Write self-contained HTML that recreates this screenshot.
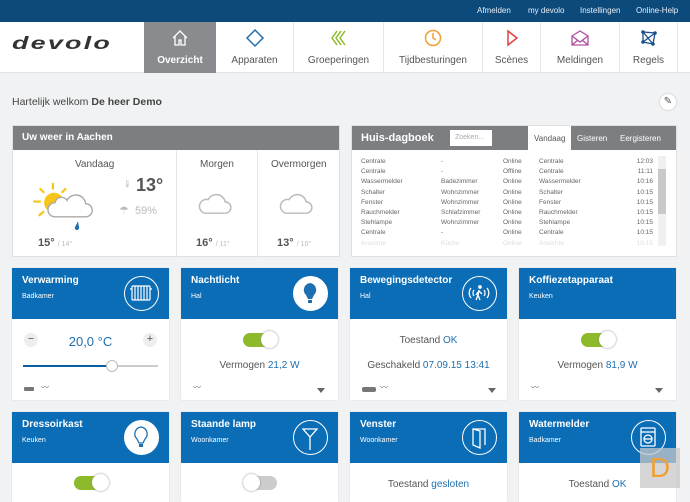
<!DOCTYPE html>
<html><head><meta charset="utf-8"><style>
*{box-sizing:border-box;margin:0;padding:0}
body{width:690px;height:498px;overflow:hidden;background:#f1f2f3;font-family:"Liberation Sans",sans-serif;color:#555;position:relative;font-size:11px}
.abs{position:absolute}
.top{left:0;top:0;width:690px;height:22px;background:#0d4a7c}
.top span{position:absolute;top:6px;font-size:8px;color:#e8eef5}
.nav{left:0;top:22px;width:690px;height:51px;background:#fff;border-bottom:1px solid #e2e3e4}
.tab{position:absolute;top:0;height:51px;text-align:center;font-size:10px;color:#555;border-right:1px solid #e6e6e6}
.tab .lbl{position:absolute;bottom:7px;left:0;right:0}
.tab svg{position:absolute;top:6px;left:50%;margin-left:-10px}
.panel{background:#fff;border:1px solid #e0e0e0}
.ph{background:#7c7e81;color:#fff;font-weight:bold;font-size:10px;height:24px;padding:6px 9px}
.card{position:absolute;width:157px;background:#fff;box-shadow:0 0 1px #ccc}
.ch{height:51px;background:#0b6db6;color:#fff;padding:7px 10px;position:relative}
.ch b{font-size:10px;display:block}
.ch small{font-size:7px;display:block;margin-top:7px}
.ic{position:absolute;right:10px;top:8px;width:35px;height:35px;border-radius:50%;border:1.5px solid #fff}
.ic.f{background:#fff}
.sw{position:absolute;width:34px;height:14px;border-radius:7px;background:#8cba2b}
.sw i{position:absolute;top:-2px;width:17px;height:17px;border-radius:50%;background:#fff;box-shadow:0 0 2px #888}
.ctr{position:absolute;left:0;right:0;text-align:center;font-size:10px;color:#555}
.bl{color:#1e6fb0}
.tri{position:absolute;width:0;height:0;border-left:4px solid transparent;border-right:4px solid transparent;border-top:5px solid #666}
table{border-collapse:collapse;font-size:6.5px;color:#666}
td{padding:0;height:10.2px;line-height:10.2px}
</style></head><body>
<div class="abs top"><span style="left:477px">Afmelden</span><span style="left:528px">my devolo</span><span style="left:580px">Instellingen</span><span style="left:636px">Online-Help</span></div>
<div class="abs nav">
<div class="abs" style="left:12px;top:12px;font-size:24px;font-style:italic;font-weight:bold;color:#333;letter-spacing:2px;transform:scale(1.12,.72);transform-origin:top left">devolo</div>
<div class="tab" style="left:144px;width:72px;background:#898b8e;color:#fff;font-weight:bold;border:none"><svg width="20" height="20" viewBox="0 0 20 20"><path d="M3 10L10 3 17 10M5 8v9h4v-5h2v5h4V8" fill="none" stroke="#fff" stroke-width="1.3"/></svg><div class="lbl">Overzicht</div></div>
<div class="tab" style="left:216px;width:78px"><svg width="20" height="20"><path d="M10 2l8 8-8 8-8-8z" fill="none" stroke="#1e6fb0" stroke-width="1.5"/></svg><div class="lbl">Apparaten</div></div>
<div class="tab" style="left:294px;width:90px"><svg width="20" height="20"><path d="M8 3l-5 7 5 7M12 3l-5 7 5 7M16 3l-5 7 5 7" fill="none" stroke="#8cba2b" stroke-width="1.5"/></svg><div class="lbl">Groeperingen</div></div>
<div class="tab" style="left:384px;width:99px"><svg width="20" height="20"><circle cx="10" cy="10" r="7.5" fill="none" stroke="#f0a030" stroke-width="1.5"/><path d="M10 5v5l3 2" fill="none" stroke="#f0a030" stroke-width="1.5"/></svg><div class="lbl">Tijdbesturingen</div></div>
<div class="tab" style="left:483px;width:58px"><svg width="20" height="20"><path d="M6 3l9 7-9 7z" fill="none" stroke="#e04040" stroke-width="1.5"/></svg><div class="lbl">Scènes</div></div>
<div class="tab" style="left:541px;width:79px"><svg width="20" height="20"><path d="M2 8l8-5 8 5v9H2zM2 8l8 6 8-6M2 17l6-5M18 17l-6-5" fill="none" stroke="#b050a0" stroke-width="1.3"/></svg><div class="lbl">Meldingen</div></div>
<div class="tab" style="left:620px;width:58px"><svg width="20" height="20"><path d="M4 4l12 1-2 11-10-2zM4 4l10 12M16 5L4 14" fill="none" stroke="#1a4f8a" stroke-width="1.3"/><circle cx="4" cy="4" r="1.8" fill="#1a4f8a"/><circle cx="16" cy="5" r="1.8" fill="#1a4f8a"/><circle cx="14" cy="16" r="1.8" fill="#1a4f8a"/><circle cx="4" cy="14" r="1.8" fill="#1a4f8a"/></svg><div class="lbl">Regels</div></div>
</div>
<div class="abs" style="left:12px;top:96px;font-size:10.5px;color:#444">Hartelijk welkom <b>De heer Demo</b></div>
<div class="abs" style="left:659px;top:93px;width:18px;height:18px;border-radius:50%;background:#fff;border:1px solid #ddd;text-align:center;font-size:10px;line-height:16px;color:#555">✎</div>

<div class="abs panel" style="left:12px;top:125px;width:328px;height:132px"><div class="ph">Uw weer in Aachen</div>
<div class="abs" style="left:163px;top:24px;width:1px;height:107px;background:#e5e5e5"></div>
<div class="abs" style="left:244px;top:24px;width:1px;height:107px;background:#e5e5e5"></div>
<div class="abs" style="left:62px;top:33px;font-size:10px">Vandaag</div>
<div class="abs" style="left:187px;top:33px;font-size:10px">Morgen</div>
<div class="abs" style="left:258px;top:33px;font-size:10px">Overmorgen</div>
<svg class="abs" style="left:18px;top:52px" width="70" height="58" viewBox="0 0 64 50"><g stroke="#f5c518" stroke-width="2"><path d="M20 3v6M8 8l4 4M2 20h7M7 33l5-4M32 8l-4 4"/></g><circle cx="21" cy="21" r="9" fill="#f5c518"/><path d="M22 34h28a6 6 0 0 0 0-12 9 9 0 0 0-17-3 6 6 0 0 0-11 2 6 6 0 0 0 0 13z" fill="#fff" stroke="#aaa" stroke-width="1.3"/><path d="M43 38l-3 6a2 2 0 0 0 4 0z" fill="#1e6fb0"/></svg>
<div class="abs" style="left:110px;top:54px;font-size:7px;color:#bbb">🌡</div>
<div class="abs" style="left:123px;top:49px;font-size:18px;font-weight:bold;color:#555">13°</div>
<div class="abs" style="left:106px;top:78px;font-size:11px;color:#bbb">☂ &nbsp;59%</div>
<div class="abs" style="left:25px;top:111px;font-size:11px;font-weight:bold">15° <span style="font-size:7px;color:#bbb;font-weight:normal">/ 14°</span></div>
<svg class="abs" style="left:185px;top:64px" width="34" height="26" viewBox="0 0 30 22"><path d="M6 20h18a5 5 0 0 0 0-10 8 8 0 0 0-15-2 6 6 0 0 0-3 12z" fill="none" stroke="#bbb" stroke-width="1.3"/></svg>
<svg class="abs" style="left:266px;top:64px" width="34" height="26" viewBox="0 0 30 22"><path d="M6 20h18a5 5 0 0 0 0-10 8 8 0 0 0-15-2 6 6 0 0 0-3 12z" fill="none" stroke="#bbb" stroke-width="1.3"/></svg>
<div class="abs" style="left:183px;top:111px;font-size:11px;font-weight:bold">16° <span style="font-size:7px;color:#bbb;font-weight:normal">/ 11°</span></div>
<div class="abs" style="left:264px;top:111px;font-size:11px;font-weight:bold">13° <span style="font-size:7px;color:#bbb;font-weight:normal">/ 10°</span></div>
</div>

<div class="abs panel" style="left:351px;top:125px;width:326px;height:132px"><div class="ph" style="font-size:11px">Huis-dagboek</div>
<div class="abs" style="left:98px;top:4px;width:42px;height:16px;background:#fff;font-size:7px;color:#aaa;padding:4px 5px">Zoeken...</div>
<div class="abs" style="left:176px;top:0;width:43px;height:25px;background:#fff;font-size:8px;padding:8px 6px">Vandaag</div>
<div class="abs" style="left:225px;top:8px;font-size:8px;color:#fff">Gisteren</div>
<div class="abs" style="left:268px;top:8px;font-size:8px;color:#fff">Eergisteren</div>
<table class="abs" style="left:9px;top:31px;width:292px">
<tr><td style="width:80px">Centrale</td><td style="width:62px">-</td><td style="width:36px">Online</td><td>Centrale</td><td style="text-align:right">12:03</td></tr>
<tr><td>Centrale</td><td>-</td><td>Offline</td><td>Centrale</td><td style="text-align:right">11:11</td></tr>
<tr><td>Wassermelder</td><td>Badezimmer</td><td>Online</td><td>Wassermelder</td><td style="text-align:right">10:16</td></tr>
<tr><td>Schalter</td><td>Wohnzimmer</td><td>Online</td><td>Schalter</td><td style="text-align:right">10:15</td></tr>
<tr><td>Fenster</td><td>Wohnzimmer</td><td>Online</td><td>Fenster</td><td style="text-align:right">10:15</td></tr>
<tr><td>Rauchmelder</td><td>Schlafzimmer</td><td>Online</td><td>Rauchmelder</td><td style="text-align:right">10:15</td></tr>
<tr><td>Stehlampe</td><td>Wohnzimmer</td><td>Online</td><td>Stehlampe</td><td style="text-align:right">10:15</td></tr>
<tr><td>Centrale</td><td>-</td><td>Online</td><td>Centrale</td><td style="text-align:right">10:15</td></tr>
<tr style="color:#ddd"><td>Ansichte</td><td>Küche</td><td>Online</td><td>Ansichte</td><td style="text-align:right">10:15</td></tr>
</table>
<div class="abs" style="left:306px;top:30px;width:8px;height:90px;background:#f0f0f0"><div style="margin-top:13px;height:45px;background:#c8c8c8"></div></div>
</div>

<!-- row 1 -->
<div class="card" style="left:12px;top:268px;height:132px"><div class="ch"><b>Verwarming</b><small>Badkamer</small><div class="ic"><svg width="32" height="32" viewBox="0 0 32 32"><g fill="none" stroke="#fff" stroke-width="1.2"><rect x="7" y="9" width="18" height="14" rx="1"/><path d="M10 9v14M13 9v14M16 9v14M19 9v14M22 9v14M5 12h2M25 12h2"/></g></svg></div></div>
<div class="abs" style="left:12px;top:65px;width:14px;height:14px;border-radius:50%;background:#eee;text-align:center;line-height:13px;font-size:11px">−</div>
<div class="abs" style="left:131px;top:65px;width:14px;height:14px;border-radius:50%;background:#eee;text-align:center;line-height:13px;font-size:11px">+</div>
<div class="ctr" style="top:66px;font-size:13px;color:#1e6fb0">20,0 °C</div>
<div class="abs" style="left:11px;top:97px;width:135px;height:2px;background:#ccc"><div style="width:90px;height:2px;background:#0b5fa0"></div></div>
<div class="abs" style="left:94px;top:92px;width:12px;height:12px;border-radius:50%;background:#fff;border:1px solid #bbb"></div>
<div class="abs" style="left:12px;top:119px;width:10px;height:4px;background:#777;border-radius:1px"></div>
<div class="abs" style="left:29px;top:114px;font-size:8px;color:#666">〰</div>
</div>
<div class="card" style="left:181px;top:268px;height:132px"><div class="ch"><b>Nachtlicht</b><small>Hal</small><div class="ic f"><svg width="32" height="32"><path d="M16 6a7 7 0 0 0-4 12l2 4h4l2-4a7 7 0 0 0-4-12z" fill="#1e6fb0"/><rect x="14" y="23" width="4" height="3" fill="#1e6fb0"/></svg></div></div>
<div class="sw" style="left:62px;top:65px"><i style="left:18px"></i></div>
<div class="ctr" style="top:92px">Vermogen <span class="bl">21,2 W</span></div>
<div class="abs" style="left:12px;top:114px;font-size:8px;color:#666">〰</div><div class="tri" style="left:136px;top:120px"></div>
</div>
<div class="card" style="left:350px;top:268px;height:132px"><div class="ch"><b>Bewegingsdetector</b><small>Hal</small><div class="ic"><svg width="32" height="32"><g fill="none" stroke="#fff" stroke-width="1.3"><path d="M8 11a8 8 0 0 0 0 10M24 11a8 8 0 0 1 0 10M11 13a5 5 0 0 0 0 6M21 13a5 5 0 0 1 0 6M16 13l-1 5 2 5M15 15l-2 3M16 14l3 3M15 18l-2 5"/><circle cx="17" cy="10" r="1.2" fill="#fff"/></g></svg></div></div>
<div class="ctr" style="top:67px">Toestand <span class="bl">OK</span></div>
<div class="ctr" style="top:92px">Geschakeld <span class="bl">07.09.15 13:41</span></div>
<div class="abs" style="left:12px;top:119px;width:14px;height:5px;background:#777;border-radius:2px"></div>
<div class="abs" style="left:30px;top:114px;font-size:8px;color:#666">〰</div><div class="tri" style="left:138px;top:120px"></div>
</div>
<div class="card" style="left:519px;top:268px;height:132px"><div class="ch"><b>Koffiezetapparaat</b><small>Keuken</small></div>
<div class="sw" style="left:62px;top:65px"><i style="left:18px"></i></div>
<div class="ctr" style="top:92px">Vermogen <span class="bl">81,9 W</span></div>
<div class="abs" style="left:12px;top:114px;font-size:8px;color:#666">〰</div><div class="tri" style="left:136px;top:120px"></div>
</div>

<!-- row 2 -->
<div class="card" style="left:12px;top:412px;height:90px"><div class="ch"><b>Dressoirkast</b><small>Keuken</small><div class="ic f"><svg width="32" height="32"><path d="M16 6a7 7 0 0 0-4 12l2 4h4l2-4a7 7 0 0 0-4-12z" fill="none" stroke="#1e6fb0" stroke-width="1.3"/><rect x="14" y="23" width="4" height="3" fill="#1e6fb0"/></svg></div></div>
<div class="sw" style="left:62px;top:64px"><i style="left:18px"></i></div></div>
<div class="card" style="left:181px;top:412px;height:90px"><div class="ch"><b>Staande lamp</b><small>Woonkamer</small><div class="ic"><svg width="32" height="32"><path d="M9 8h14l-7 8zM16 16v13" fill="none" stroke="#fff" stroke-width="1.3"/></svg></div></div>
<div class="sw" style="left:62px;top:64px;background:#ccc"><i style="left:0"></i></div></div>
<div class="card" style="left:350px;top:412px;height:90px"><div class="ch"><b>Venster</b><small>Woonkamer</small><div class="ic"><svg width="32" height="32"><path d="M10 8h12v16M10 8v16l7 3V10z" fill="none" stroke="#fff" stroke-width="1.3"/></svg></div></div>
<div class="ctr" style="top:67px">Toestand <span class="bl">gesloten</span></div></div>
<div class="card" style="left:519px;top:412px;height:90px"><div class="ch"><b>Watermelder</b><small>Badkamer</small><div class="ic"><svg width="32" height="32"><g fill="none" stroke="#fff" stroke-width="1.3"><rect x="9" y="7" width="14" height="18" rx="1"/><path d="M9 11h14"/><circle cx="16" cy="18" r="4"/><path d="M12 18h8"/></g></svg></div></div>
<div class="ctr" style="top:67px">Toestand <span class="bl">OK</span></div></div>
<div class="abs" style="left:640px;top:448px;width:40px;height:40px;background:rgba(200,200,200,.75);color:#f0a030;font-size:28px;text-align:center;line-height:40px">D</div>
</body></html>
